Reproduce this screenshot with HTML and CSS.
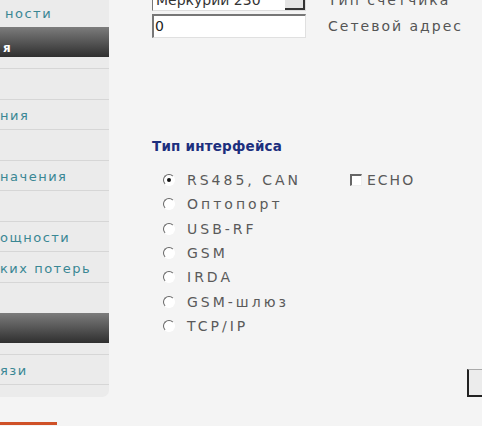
FILE: index.html
```html
<!DOCTYPE html>
<html lang="ru">
<head>
<meta charset="utf-8">
<title>Параметры</title>
<link rel="stylesheet" href="styles.css">
</head>
<body>
<div class="page">
  <aside class="side">
    <div class="menu">
      <div class="item top"><span>ности</span></div>
      <div class="head"><span>я</span></div>
      <div class="sec">
        <div class="row"></div>
        <div class="row"><span>ния</span></div>
        <div class="row"></div>
        <div class="row"><span>начения</span></div>
        <div class="row"></div>
        <div class="row"><span>ощности</span></div>
        <div class="row"><span>ких потерь</span></div>
      </div>
      <div class="gap"></div>
      <div class="head"></div>
      <div class="sec last">
        <div class="row"><span>язи</span></div>
      </div>
    </div>
    <div class="orange"></div>
  </aside>
  <main class="main">
    <div class="form">
      <div class="select"><span class="sel-text">Меркурий 230</span><span class="sel-btn"></span></div>
      <div class="label">Тип счетчика</div>
      <div class="input">0</div>
      <div class="label">Сетевой адрес</div>
    </div>
    <h3 class="title">Тип интерфейса</h3>
    <div class="iface">
      <ul class="radios">
        <li><span class="radio on"></span>RS485, CAN</li>
        <li><span class="radio"></span>Оптопорт</li>
        <li><span class="radio"></span>USB-RF</li>
        <li><span class="radio"></span>GSM</li>
        <li><span class="radio"></span>IRDA</li>
        <li><span class="radio"></span>GSM-шлюз</li>
        <li><span class="radio"></span>TCP/IP</li>
      </ul>
      <div class="echo"><span class="check"></span>ECHO</div>
    </div>
    <div class="btn-row"><span class="btn"></span></div>
  </main>
</div>
</body>
</html>
```
FILE: styles.css
```css
html, body {
  margin: 0;
  padding: 0;
  overflow: hidden;
  background: #f4f4f4;
}
body {
  width: 482px;
  height: 426px;
  font-family: "DejaVu Sans", Verdana, sans-serif;
}
.page {
  display: flex;
  height: 426px;
}
.side {
  width: 109px;
  flex: none;
  display: flex;
  flex-direction: column;
}
.menu {
  background: #ebebeb;
  height: 397px;
  border-bottom-right-radius: 7px;
  font-size: 13px;
  letter-spacing: 1.5px;
  color: #3a8794;
  white-space: nowrap;
}
.item.top {
  height: 27px;
  display: flex;
  align-items: center;
  padding-left: 5px;
}
.head {
  height: 30px;
  background: linear-gradient(#7c7c7c, #2f2f2f);
  color: #fff;
  font-weight: bold;
  font-size: 12px;
  display: flex;
  align-items: flex-end;
  padding-left: 3px;
  box-sizing: border-box;
  padding-bottom: 2px;
}
.sec {
  padding-top: 11px;
}
.row {
  height: 30.5px;
  box-sizing: border-box;
  border-top: 1px solid #d6d6d6;
  display: flex;
  align-items: center;
  padding-top: 3px;
}
.sec.last .row {
  border-bottom: 1px solid #d6d6d6;
  height: 31px;
}
.gap {
  height: 31px;
  border-top: 1px solid #d6d6d6;
  box-sizing: border-box;
}
.orange {
  margin-top: 25px;
  width: 57px;
  height: 3px;
  background: #cf5127;
}
.main {
  flex: 1;
  padding-left: 43px;
  display: flex;
  flex-direction: column;
  min-width: 0;
}
.form {
  margin-top: -11px;
  display: grid;
  grid-template-columns: 154px auto;
  column-gap: 22px;
  row-gap: 3px;
  align-items: center;
}
.select {
  height: 22px;
  box-sizing: border-box;
  background: #fff;
  border: 1px solid #777;
  border-right-color: #ddd;
  border-bottom-color: #ddd;
  display: flex;
  align-items: center;
  font-size: 14px;
  color: #333;
}
.sel-text {
  flex: 1;
  padding-left: 3px;
}
.sel-btn {
  width: 20px;
  height: 20px;
  box-sizing: border-box;
  background: #e4e4e4;
  border-right: 2px solid #333;
  border-bottom: 2px solid #333;
}
.input {
  height: 24px;
  box-sizing: border-box;
  background: #fff;
  border: 1px solid #e0e0e0;
  border-top: 2px solid #777;
  border-left: 2px solid #777;
  font-size: 14px;
  color: #222;
  line-height: 20px;
  padding-left: 1px;
}
.label {
  font-size: 14px;
  letter-spacing: 2px;
  color: #555;
  white-space: nowrap;
}
.title {
  margin: 100px 0 0;
  font-size: 13.5px;
  line-height: 16px;
  font-weight: bold;
  color: #1c2f7e;
  letter-spacing: 0.2px;
}
.iface {
  display: flex;
  margin-top: 14px;
}
.radios {
  list-style: none;
  margin: 0;
  padding: 0 0 0 11px;
  width: 187px;
}
.radios li {
  height: 24.3px;
  display: flex;
  align-items: center;
  font-size: 14px;
  letter-spacing: 3px;
  color: #5a5a5a;
  white-space: nowrap;
}
.radio {
  width: 10px;
  height: 10px;
  border-radius: 50%;
  background: #fff;
  border: 1px solid #fff;
  border-top-color: #666;
  border-left-color: #666;
  margin-right: 12px;
  position: relative;
  flex: none;
}
.radio.on::after {
  content: "";
  position: absolute;
  left: 3px;
  top: 3px;
  width: 4px;
  height: 4px;
  border-radius: 50%;
  background: #111;
}
.echo {
  display: flex;
  align-items: center;
  height: 24.3px;
  font-size: 14px;
  letter-spacing: 2px;
  color: #5a5a5a;
}
.check {
  width: 12px;
  height: 12px;
  box-sizing: border-box;
  background: #fff;
  border-top: 2px solid #666;
  border-left: 2px solid #666;
  border-right: 1px solid #eee;
  border-bottom: 1px solid #eee;
  margin-right: 5px;
}
.btn-row {
  display: flex;
  justify-content: flex-end;
  margin-top: 31px;
}
.btn {
  width: 30px;
  height: 28px;
  box-sizing: border-box;
  margin-right: -15px;
  background: #ececec;
  border-top: 1px solid #aaa;
  border-left: 2px solid #222;
  border-bottom: 2px solid #222;
}
```
